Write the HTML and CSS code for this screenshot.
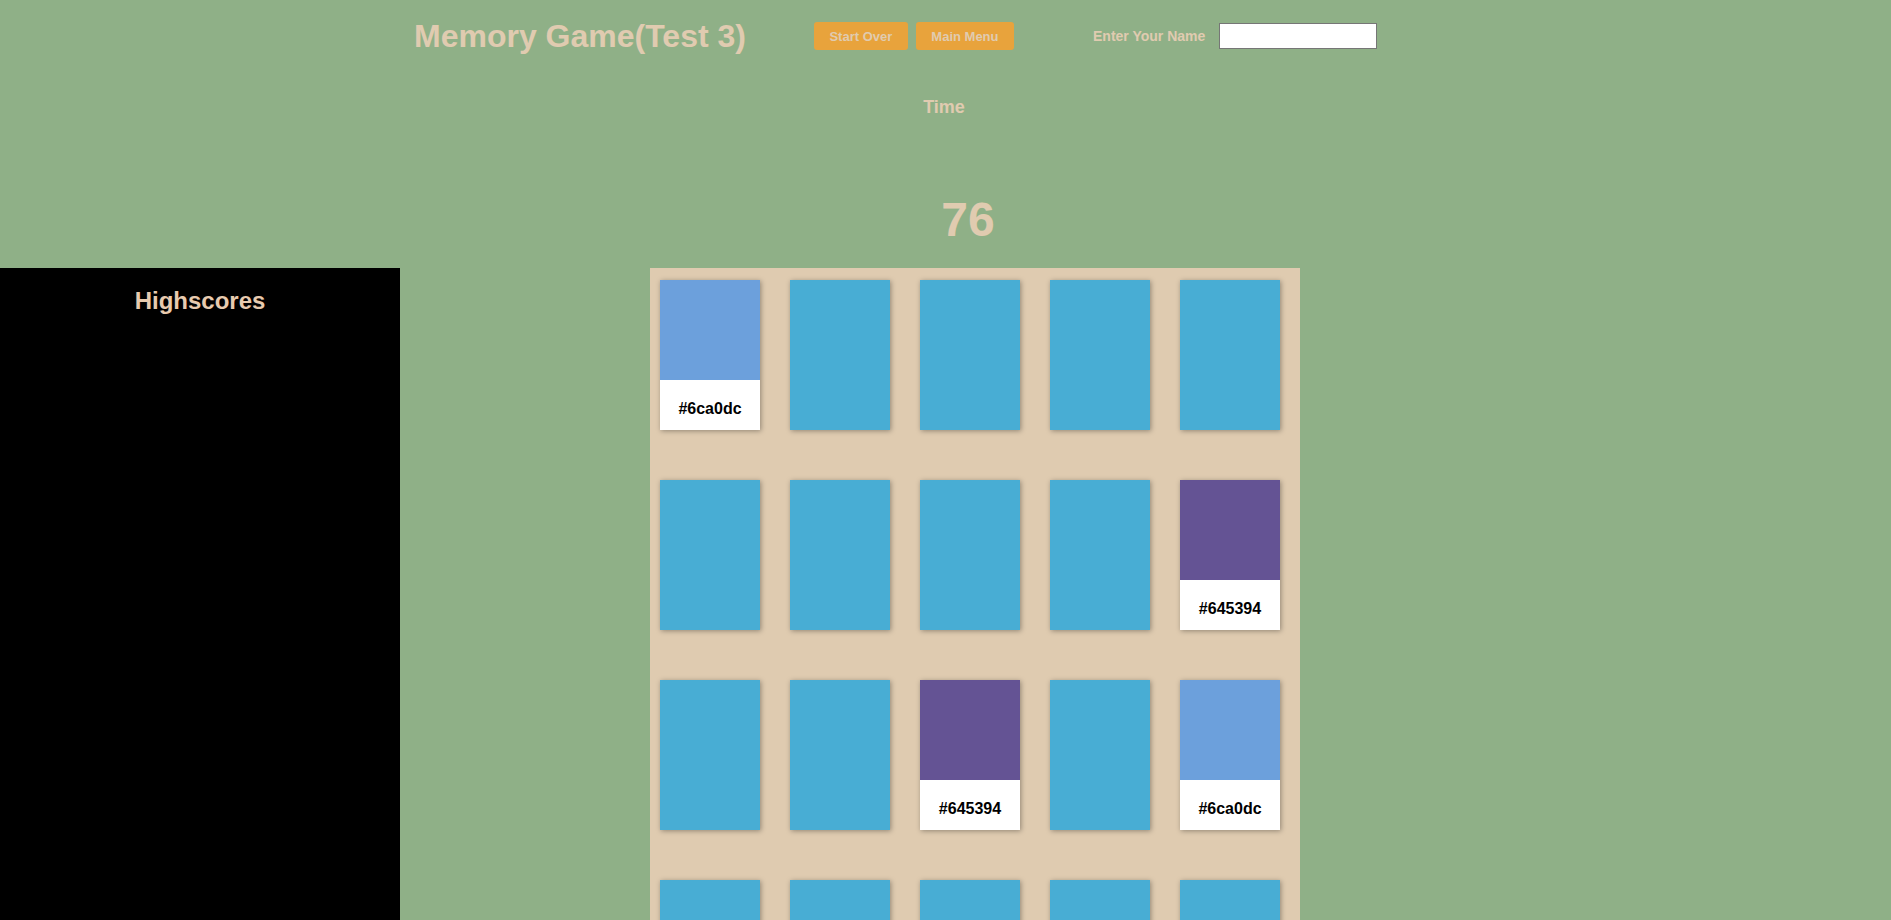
FILE: index.html
```html
<!DOCTYPE html>
<html>
<head>
<meta charset="utf-8">
<title>Memory Game</title>
<link rel="stylesheet" href="styles.css">
</head>
<body>
<header class="topbar">
  <h1 class="title">Memory Game(Test 3)</h1>
  <div class="actions">
    <button class="btn">Start Over</button>
    <button class="btn">Main Menu</button>
  </div>
  <label class="name-label" for="player">Enter Your Name</label>
  <input class="name-input" id="player" type="text">
</header>
<section class="timer">
  <div class="time-label">Time</div>
  <div class="time-value">76</div>
</section>
<main class="main">
  <aside class="scores">
    <h2 class="scores-title">Highscores</h2>
  </aside>
  <div class="board">
    <div class="card card-open"><div class="swatch" style="background:#6ca0dc"></div><div class="label">#6ca0dc</div></div>
    <div class="card"></div>
    <div class="card"></div>
    <div class="card"></div>
    <div class="card"></div>

    <div class="card"></div>
    <div class="card"></div>
    <div class="card"></div>
    <div class="card"></div>
    <div class="card card-open"><div class="swatch" style="background:#645394"></div><div class="label">#645394</div></div>

    <div class="card"></div>
    <div class="card"></div>
    <div class="card card-open"><div class="swatch" style="background:#645394"></div><div class="label">#645394</div></div>
    <div class="card"></div>
    <div class="card card-open"><div class="swatch" style="background:#6ca0dc"></div><div class="label">#6ca0dc</div></div>

    <div class="card"></div>
    <div class="card"></div>
    <div class="card"></div>
    <div class="card"></div>
    <div class="card"></div>
  </div>
</main>
</body>
</html>
```
FILE: styles.css
```css
html, body {
  margin: 0;
  padding: 0;
}
body {
  background: #8fb087;
  font-family: "Liberation Sans", Arial, sans-serif;
  color: #e0cbb0;
  overflow: hidden;
}
.topbar {
  height: 72px;
  display: flex;
  align-items: center;
  padding-left: 414px;
}
.title {
  margin: 0;
  font-size: 32px;
  font-weight: bold;
  color: #e0cbb0;
  line-height: 37px;
}
.actions {
  display: flex;
  gap: 8px;
  margin-left: 68px;
}
.btn {
  height: 28px;
  padding: 0 15.5px;
  border: none;
  border-radius: 3px;
  background: #e8a33c;
  color: #e0cbb0;
  font-family: "Liberation Sans", Arial, sans-serif;
  font-size: 13px;
  font-weight: bold;
}
.name-label {
  margin-left: 79px;
  font-size: 14px;
  font-weight: bold;
  color: #e0cbb0;
}
.name-input {
  margin-left: 14px;
  width: 158px;
  height: 26px;
  box-sizing: border-box;
  border: 1px solid #767676;
  background: #fff;
  padding: 0 4px;
}
.timer {
  display: flex;
  flex-direction: column;
  align-items: center;
}
.time-label {
  margin-top: 25px;
  padding-right: 3px;
  font-size: 18px;
  line-height: 21px;
  font-weight: bold;
}
.time-value {
  margin-top: 74px;
  padding-left: 45px;
  font-size: 48px;
  line-height: 56px;
  font-weight: bold;
}
.main {
  margin-top: 20px;
  display: flex;
  align-items: flex-start;
}
.scores {
  width: 400px;
  height: 700px;
  background: #000;
  overflow: hidden;
}
.scores-title {
  margin: 19px 0 0;
  text-align: center;
  font-size: 24px;
  font-weight: bold;
  color: #e8cbaf;
}
.board {
  margin-left: 250px;
  width: 650px;
  box-sizing: border-box;
  padding: 12px 20px 20px 10px;
  background: #dfcbb0;
  display: grid;
  grid-template-columns: repeat(5, 100px);
  column-gap: 30px;
  row-gap: 50px;
}
.card {
  width: 100px;
  height: 150px;
  background: #48add4;
  box-shadow: 1px 1px 5px rgba(0, 0, 0, 0.35);
  display: flex;
  flex-direction: column;
}
.card-open {
  background: #fff;
}
.swatch {
  height: 100px;
}
.label {
  height: 50px;
  box-sizing: border-box;
  padding-top: 7px;
  line-height: 43px;
  text-align: center;
  font-size: 16px;
  font-weight: bold;
  color: #000;
}
```
